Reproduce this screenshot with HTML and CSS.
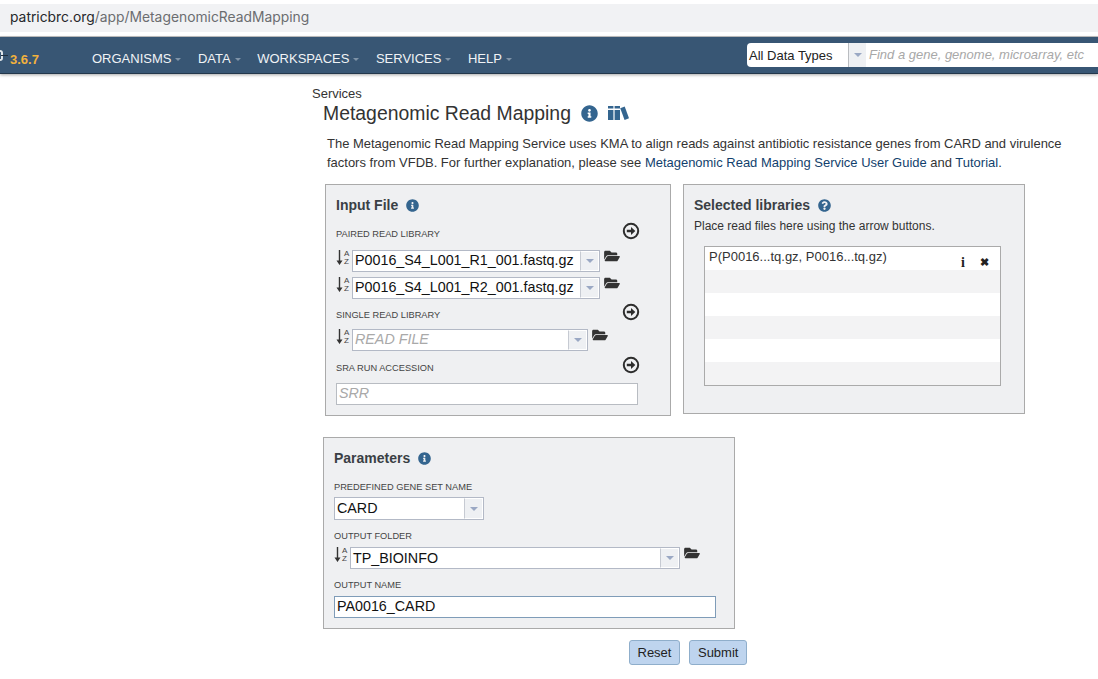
FILE: index.html
```html
<!DOCTYPE html>
<html>

<head>
  <title>Metagenomic Read Mapping</title>
  <link rel="stylesheet" href="styles.css">
</head>

<body>
  <svg class="sprite" xmlns="http://www.w3.org/2000/svg">
    <symbol id="i-info" viewBox="0 0 512 512">
      <path d="M256 8C119.043 8 8 119.083 8 256c0 136.997 111.043 248 248 248s248-111.003 248-248C504 119.083 392.957 8 256 8zm0 110c23.196 0 42 18.804 42 42s-18.804 42-42 42-42-18.804-42-42 18.804-42 42-42zm56 254c0 6.627-5.373 12-12 12h-88c-6.627 0-12-5.373-12-12v-24c0-6.627 5.373-12 12-12h12v-64h-12c-6.627 0-12-5.373-12-12v-24c0-6.627 5.373-12 12-12h64c6.627 0 12 5.373 12 12v100h12c6.627 0 12 5.373 12 12v24z"/>
    </symbol>
    <symbol id="i-question" viewBox="0 0 512 512">
      <path d="M504 256c0 136.997-111.043 248-248 248S8 392.997 8 256C8 119.083 119.043 8 256 8s248 111.083 248 248zM262.655 90c-54.497 0-89.255 22.957-116.549 63.758-3.536 5.286-2.353 12.415 2.715 16.258l34.699 26.31c5.205 3.947 12.621 3.008 16.665-2.122 17.864-22.658 30.113-35.797 57.303-35.797 20.429 0 45.698 13.148 45.698 32.958 0 14.976-12.363 22.667-32.534 33.976C247.128 238.528 216 254.941 216 296v4c0 6.627 5.373 12 12 12h56c6.627 0 12-5.373 12-12v-1.333c0-28.462 83.186-29.647 83.186-106.667 0-58.002-60.165-102-116.531-102zM256 338c-25.365 0-46 20.635-46 46 0 25.364 20.635 46 46 46s46-20.636 46-46c0-25.365-20.635-46-46-46z"/>
    </symbol>
    <symbol id="i-folder" viewBox="0 0 576 512">
      <path d="M572.694 292.093L500.27 416.248A63.997 63.997 0 0 1 444.989 448H45.025c-18.523 0-30.064-20.093-20.731-36.093l72.424-124.155A64 64 0 0 1 152 256h399.964c18.523 0 30.064 20.093 20.73 36.093zM152 224h328v-48c0-26.51-21.49-48-48-48H272l-64-64H48C21.49 64 0 85.49 0 112v278.046l69.077-118.418C86.214 242.25 117.989 224 152 224z"/>
    </symbol>
    <symbol id="i-arrow" viewBox="0 0 18 18">
      <circle cx="9" cy="9" r="7.200" fill="none" stroke="currentColor" stroke-width="2"/>
      <path d="M4.800 7.700h4.200V5l4.300 4-4.300 4v-2.700H4.800z"/>
    </symbol>
    <symbol id="i-sort" viewBox="0 0 7 15">
      <path d="M2.800 0h1.400v10.500h2.300L3.500 15 .5 10.500h2.300z"/>
    </symbol>
    <symbol id="i-books" viewBox="0 0 21 14">
      <path d="M0 0h5.400v14H0zM0 2.500V4h5.400V2.500zM6.600 0H12v14H6.600zM6.600 2.500V4H12V2.500z" fill-rule="evenodd"/>
      <path d="M12.200 2.200l4.500-1.800L21 12.300 16.600 14z"/>
    </symbol>
  </svg>

  <div class="urlbar">
    <div class="url"><span class="host">patricbrc.org</span>/app/MetagenomicReadMapping</div>
  </div>

  <nav class="navbar">
    <span class="logo-g"></span>
    <span class="version">3.6.7</span>
    <ul class="menu">
      <li>ORGANISMS</li>
      <li>DATA</li>
      <li>WORKSPACES</li>
      <li>SERVICES</li>
      <li>HELP</li>
    </ul>
    <div class="search">
      <span class="search-type">All Data Types</span>
      <span class="search-arrow"><i class="caret"></i></span>
      <span class="search-text">Find a gene, genome, microarray, etc</span>
    </div>
  </nav>

  <main class="page">
    <div class="crumb">Services</div>
    <h1>Metagenomic Read Mapping
      <svg class="icon title-info"><use href="#i-info"/></svg>
      <svg class="icon title-books"><use href="#i-books"/></svg>
    </h1>
    <p class="intro">The Metagenomic Read Mapping Service uses KMA to align reads against antibiotic resistance genes from CARD and virulence<br>factors from VFDB. For further explanation, please see <a href="#">Metagenomic Read Mapping Service User Guide</a> and <a href="#">Tutorial</a>.</p>

    <div class="top-row">
      <section class="panel input-panel">
        <h2>Input File <svg class="icon help"><use href="#i-info"/></svg></h2>

        <div class="label-row label-first">
          <label>PAIRED READ LIBRARY</label>
          <svg class="add"><use href="#i-arrow"/></svg>
        </div>
        <div class="picker">
          <span class="sort"><svg class="sort-arrow"><use href="#i-sort"/></svg><span class="az">A<br>Z</span></span>
          <div class="select w-248"><span class="value">P0016_S4_L001_R1_001.fastq.gz</span><span class="drop"><i class="caret"></i></span></div>
          <svg class="folder"><use href="#i-folder"/></svg>
        </div>
        <div class="picker picker-next">
          <span class="sort"><svg class="sort-arrow"><use href="#i-sort"/></svg><span class="az">A<br>Z</span></span>
          <div class="select w-248"><span class="value">P0016_S4_L001_R2_001.fastq.gz</span><span class="drop"><i class="caret"></i></span></div>
          <svg class="folder"><use href="#i-folder"/></svg>
        </div>

        <div class="label-row label-single">
          <label>SINGLE READ LIBRARY</label>
          <svg class="add"><use href="#i-arrow"/></svg>
        </div>
        <div class="picker">
          <span class="sort"><svg class="sort-arrow"><use href="#i-sort"/></svg><span class="az">A<br>Z</span></span>
          <div class="select w-236"><span class="value placeholder">READ FILE</span><span class="drop"><i class="caret"></i></span></div>
          <svg class="folder"><use href="#i-folder"/></svg>
        </div>

        <div class="label-row label-sra">
          <label>SRA RUN ACCESSION</label>
          <svg class="add"><use href="#i-arrow"/></svg>
        </div>
        <div class="textbox w-302 placeholder">SRR</div>
      </section>

      <section class="panel libs-panel">
        <h2>Selected libraries <svg class="icon help"><use href="#i-question"/></svg></h2>
        <p class="hint">Place read files here using the arrow buttons.</p>
        <div class="libs">
          <div class="lib-row">
            <span>P(P0016...tq.gz, P0016...tq.gz)</span>
            <span class="lib-actions"><b class="lib-i">i</b><b class="lib-x">✖</b></span>
          </div>
          <div class="lib-row"></div>
          <div class="lib-row"></div>
          <div class="lib-row"></div>
          <div class="lib-row"></div>
          <div class="lib-row"></div>
        </div>
      </section>
    </div>

    <section class="panel params-panel">
      <h2>Parameters <svg class="icon help"><use href="#i-info"/></svg></h2>

      <label class="field-label first">PREDEFINED GENE SET NAME</label>
      <div class="select w-150 tall"><span class="value">CARD</span><span class="drop"><i class="caret"></i></span></div>

      <label class="field-label">OUTPUT FOLDER</label>
      <div class="picker picker-folder">
        <span class="sort"><svg class="sort-arrow"><use href="#i-sort"/></svg><span class="az">A<br>Z</span></span>
        <div class="select w-330"><span class="value">TP_BIOINFO</span><span class="drop"><i class="caret"></i></span></div>
        <svg class="folder"><use href="#i-folder"/></svg>
      </div>

      <label class="field-label name-label">OUTPUT NAME</label>
      <div class="textbox w-382 active">PA0016_CARD</div>
    </section>

    <div class="actions">
      <button>Reset</button>
      <button class="submit">Submit</button>
    </div>
  </main>
</body>

</html>
```

FILE: styles.css
```css
* {
  box-sizing: border-box;
}

body {
  margin: 0;
  font-family: "Liberation Sans", Arial, sans-serif;
  font-size: 12px;
  color: #333;
  background-color: #fff;
  overflow: hidden;
}

.sprite {
  display: none;
}

/* barra del navegador */
.urlbar {
  height: 37px;
  padding-top: 4px;
  background-color: #fff;
  border-bottom: 1px solid #c4c4c4;
}

.url {
  height: 28px;
  padding-left: 10px;
  background-color: #f1f2f4;
  font-family: Inter, "Liberation Sans", sans-serif;
  font-size: 13.85px;
  line-height: 27px;
  color: #6b6d70;
}

.host {
  color: #26282b;
}

/* barra de navegacion */
.navbar {
  display: flex;
  align-items: center;
  height: 37px;
  padding-bottom: 1px;
  background-color: #385674;
  border-top: 1px solid #385674;
  border-bottom: 1px solid #23374b;
  box-shadow: 0 1px 3px rgba(0, 0, 0, 0.35);
  position: relative;
}

.logo-g {
  position: relative;
  width: 3px;
  height: 11px;
  border: 2px solid #dfe5ea;
  border-left: none;
  border-radius: 0 3px 3px 0;
}

.logo-g::after {
  content: "";
  position: absolute;
  left: 1px;
  top: 3px;
  width: 7px;
  height: 1px;
  background-color: #1f2f40;
}

.version {
  width: 82px;
  margin-left: 7px;
  margin-top: 8px;
  font-size: 13px;
  font-weight: bold;
  color: #f1b13d;
}

.menu {
  display: flex;
  flex: 1;
  margin: 6px 0 0;
  padding: 0;
  list-style: none;
}

.menu li {
  margin-right: 16.5px;
  font-size: 13px;
  color: #f0f3f6;
}

.menu li::after {
  content: "";
  display: inline-block;
  margin-left: 4px;
  vertical-align: 2px;
  border-top: 3px solid #7f93a8;
  border-left: 3px solid transparent;
  border-right: 3px solid transparent;
}

.search {
  display: flex;
  align-items: center;
  width: 351px;
  height: 24px;
  background-color: #fff;
  border-radius: 4px 0 0 4px;
  overflow: hidden;
  font-size: 13px;
}

.search-type {
  width: 101px;
  padding-left: 2px;
  color: #222;
}

.search-arrow {
  display: flex;
  align-items: center;
  justify-content: center;
  width: 18px;
  height: 24px;
  background-color: #eef0f3;
  border-left: 1px solid #b9bcc0;
}

.search-text {
  padding-left: 3px;
  margin-top: -2px;
  font-style: italic;
  color: #a8a8a8;
}

.caret {
  display: block;
  border-top: 4px solid #9aa8c4;
  border-left: 4px solid transparent;
  border-right: 4px solid transparent;
}

/* contenido */
.page {
  padding: 12px 0 0 312px;
}

.crumb {
  font-size: 13px;
  line-height: 15px;
}

h1 {
  display: flex;
  align-items: center;
  margin: 0 0 0 11px;
  font-size: 19.4px;
  font-weight: normal;
  line-height: 24px;
}

.icon {
  fill: #34658f;
}

.title-info {
  width: 17px;
  height: 17px;
  margin-left: 10px;
}

.title-books {
  width: 21px;
  height: 14px;
  margin-left: 10px;
}

.intro {
  margin: 9px 0 0 15px;
  font-size: 12.98px;
  line-height: 19px;
}

a {
  color: #123f6d;
  text-decoration: none;
}

.top-row {
  display: flex;
  align-items: flex-start;
  margin: 12px 0 0 13px;
}

.panel {
  background-color: #eff0f2;
  border: 1px solid #aaa;
}

h2 {
  display: flex;
  align-items: center;
  margin: 0;
  font-size: 14px;
  font-weight: bold;
  line-height: 16px;
  color: #3a3f45;
}

.help {
  width: 13px;
  height: 13px;
  margin-left: 8px;
}

.input-panel {
  width: 346px;
  height: 232px;
  padding: 12px 10px 0;
}

.libs-panel {
  width: 342px;
  height: 230px;
  margin-left: 12px;
  padding: 12px 10px 0;
}

.params-panel {
  width: 412px;
  height: 192px;
  margin: 21px 0 0 11px;
  padding: 12px 10px 0;
}

.label-row {
  display: flex;
  align-items: center;
  justify-content: space-between;
  width: 304px;
  height: 18px;
}

.label-first {
  margin-top: 9px;
  margin-bottom: 10px;
}

.label-single {
  margin-top: 4px;
  margin-bottom: 8px;
}

.label-sra {
  margin-top: 5px;
  margin-bottom: 9px;
}

label {
  font-size: 9.25px;
  color: #444;
}

.label-row label {
  padding-top: 6px;
}

.field-label {
  display: block;
  margin: 10px 0 2px;
  line-height: 13px;
}

.field-label.first {
  margin: 15px 0 3px;
}

.field-label.name-label {
  margin: 10px 0 4px;
}

.add {
  width: 18px;
  height: 18px;
  fill: #2d2d2d;
  color: #2d2d2d;
}

.picker {
  display: flex;
  align-items: flex-start;
  height: 22px;
}

.picker-next {
  margin-top: 5px;
}

.picker-folder {
  margin-top: 4px;
}

.sort {
  display: flex;
  width: 16px;
  height: 20px;
}

.sort-arrow {
  width: 7px;
  height: 15px;
  fill: #333;
}

.az {
  margin-left: 1px;
  font-size: 8px;
  line-height: 8px;
  color: #444;
}

.select {
  display: flex;
  justify-content: space-between;
  height: 22px;
  background-color: #fff;
  border: 1px solid #b3b9c6;
}

.select.tall {
  height: 23px;
}

.value {
  padding-left: 2px;
  font-size: 14.3px;
  line-height: 20px;
  color: #111;
  white-space: nowrap;
}

.input-panel .value {
  line-height: 18px;
}

.placeholder {
  font-style: italic;
  color: #a9a9a9;
}

.drop {
  display: flex;
  align-items: center;
  justify-content: center;
  flex: none;
  width: 19px;
  margin: 0;
  background-color: #eef0f3;
  border-left: 1px solid #c6cad2;
  border-top: 1px solid #fff;
  border-right: 1px solid #fff;
  border-bottom: 1px solid #fff;
}

.w-150 { width: 150px; }
.w-236 { width: 236px; }
.w-248 { width: 248px; }
.w-330 { width: 330px; }

.folder {
  width: 16px;
  height: 14px;
  margin-left: 4px;
  margin-top: -1px;
  fill: #333;
}

.textbox {
  height: 22px;
  padding-left: 2px;
  background-color: #fff;
  border: 1px solid #b8bcc2;
  font-size: 14.3px;
  line-height: 19px;
  color: #111;
}

.textbox.placeholder {
  color: #a9a9a9;
}

.textbox.active {
  border-color: #7f9cb8;
}

.w-302 { width: 302px; }
.w-382 { width: 382px; }

.hint {
  margin: 5px 0 0;
  font-size: 12px;
  line-height: 16px;
}

.libs {
  width: 297px;
  height: 140px;
  margin: 12px 0 0 10px;
  background-color: #f3f3f4;
  border: 1px solid #aaa;
}

.lib-row {
  display: flex;
  justify-content: space-between;
  height: 23px;
  padding: 2px 9px 0 4px;
  font-size: 13px;
  line-height: 15px;
  background-color: #fff;
}

.lib-row:nth-child(even) {
  background-color: #f3f3f4;
}

.lib-actions {
  display: flex;
  align-items: center;
  color: #222;
}

.lib-i {
  width: 17px;
  margin-top: 6px;
  font-family: "Liberation Serif", serif;
  font-size: 14px;
}

.lib-x {
  width: 13px;
  margin-top: 6px;
  text-align: center;
  font-size: 11px;
}

.actions {
  display: flex;
  gap: 9px;
  margin: 11px 0 0 317px;
}

button {
  height: 25px;
  padding: 0 7.5px;
  background-color: #bed4ee;
  border: 1px solid #8faecb;
  border-radius: 3px;
  font-family: "Liberation Sans", Arial, sans-serif;
  font-size: 13px;
  color: #222;
}

.submit {
  padding: 0 8px;
}
```
